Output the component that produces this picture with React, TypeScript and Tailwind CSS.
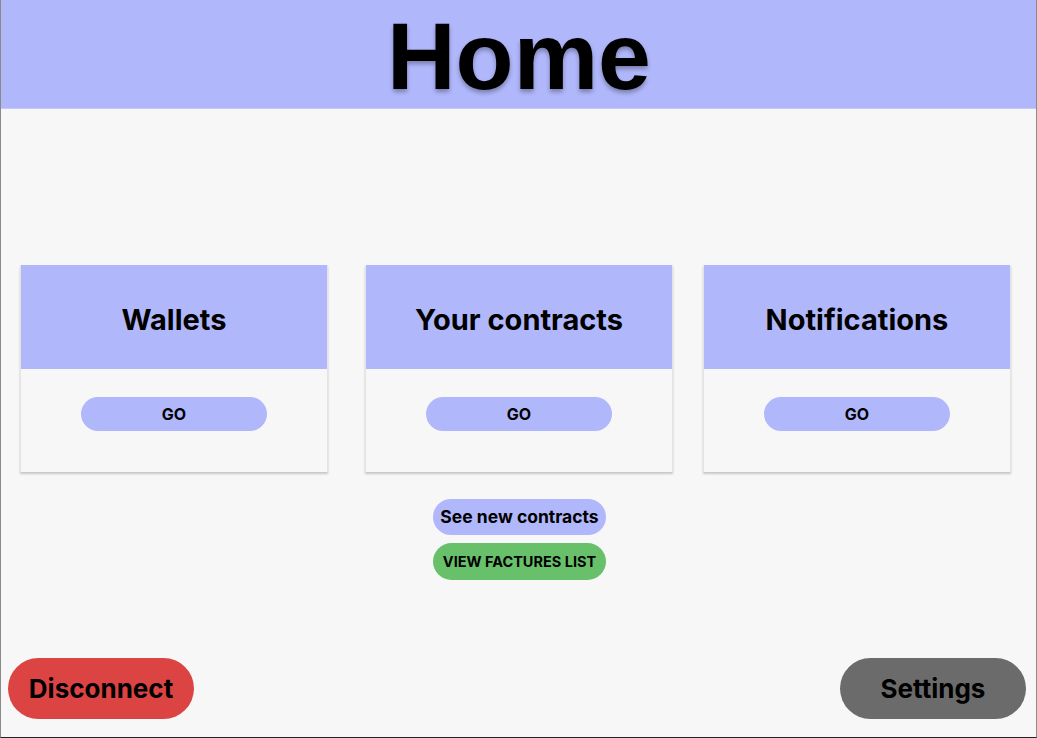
const Card = ({ title, className }: { title: string; className?: string }) => {
    return (
        <div className={"w-[308px] h-[207px] flex flex-col bg-[#f7f7f7] border-x border-[#e4e4e4] shadow-[0_2px_2px_rgba(0,0,0,0.2)] " + (className ?? "")}>
            <div className="h-[104px] bg-[#b0b7fb] flex items-center justify-center pt-[6px]">
                <h2 className="text-[29px] font-bold text-black">{title}</h2>
            </div>
            <div className="flex justify-center pt-[28px]">
                <button className="w-[186px] h-[34px] rounded-full bg-[#b0b7fb] text-[16px] font-bold text-black">
                    GO
                </button>
            </div>
        </div>
    );
}

const App = () => {
    return (
        <div className="h-[738px] flex flex-col bg-[#f7f7f7] border-x border-b border-x-[#8a8a8a] border-b-[#222] font-['Inter','Noto_Sans',sans-serif] overflow-hidden">
            <header className="h-[109px] shrink-0 bg-[#b0b7fb] border-b border-[#c4c9fc] flex justify-center">
                <h1 className="text-[95px] leading-none font-bold text-black font-['Liberation_Sans',Arial,sans-serif] pt-[9px] pl-[1px] [text-shadow:0_3px_4px_rgba(0,0,0,0.3)]">
                    Home
                </h1>
            </header>

            <div className="flex-1 flex flex-col">
                <div className="flex mt-[156px] pl-[19px]">
                    <Card title="Wallets" />
                    <Card title="Your contracts" className="ml-[37px]" />
                    <Card title="Notifications" className="ml-[30px]" />
                </div>

                <div className="flex flex-col items-center gap-[8px] mt-[27px] pl-[2px]">
                    <button className="w-[173px] h-[36px] rounded-full bg-[#b0b7fb] text-[17.5px] font-bold text-black">
                        See new contracts
                    </button>
                    <button className="w-[173px] h-[37px] rounded-full bg-[#68c16a] text-[14.5px] font-bold text-black">
                        VIEW FACTURES LIST
                    </button>
                </div>

                <div className="mt-auto flex justify-between items-end pl-[7px] pr-[10px] pb-[18px]">
                    <button className="w-[186px] h-[61px] rounded-full bg-[#dc4343] text-[26px] font-bold text-black">
                        Disconnect
                    </button>
                    <button className="w-[186px] h-[61px] rounded-full bg-[#6b6b6b] text-[26px] font-bold text-black">
                        Settings
                    </button>
                </div>
            </div>
        </div>
    );
}

export default App;
